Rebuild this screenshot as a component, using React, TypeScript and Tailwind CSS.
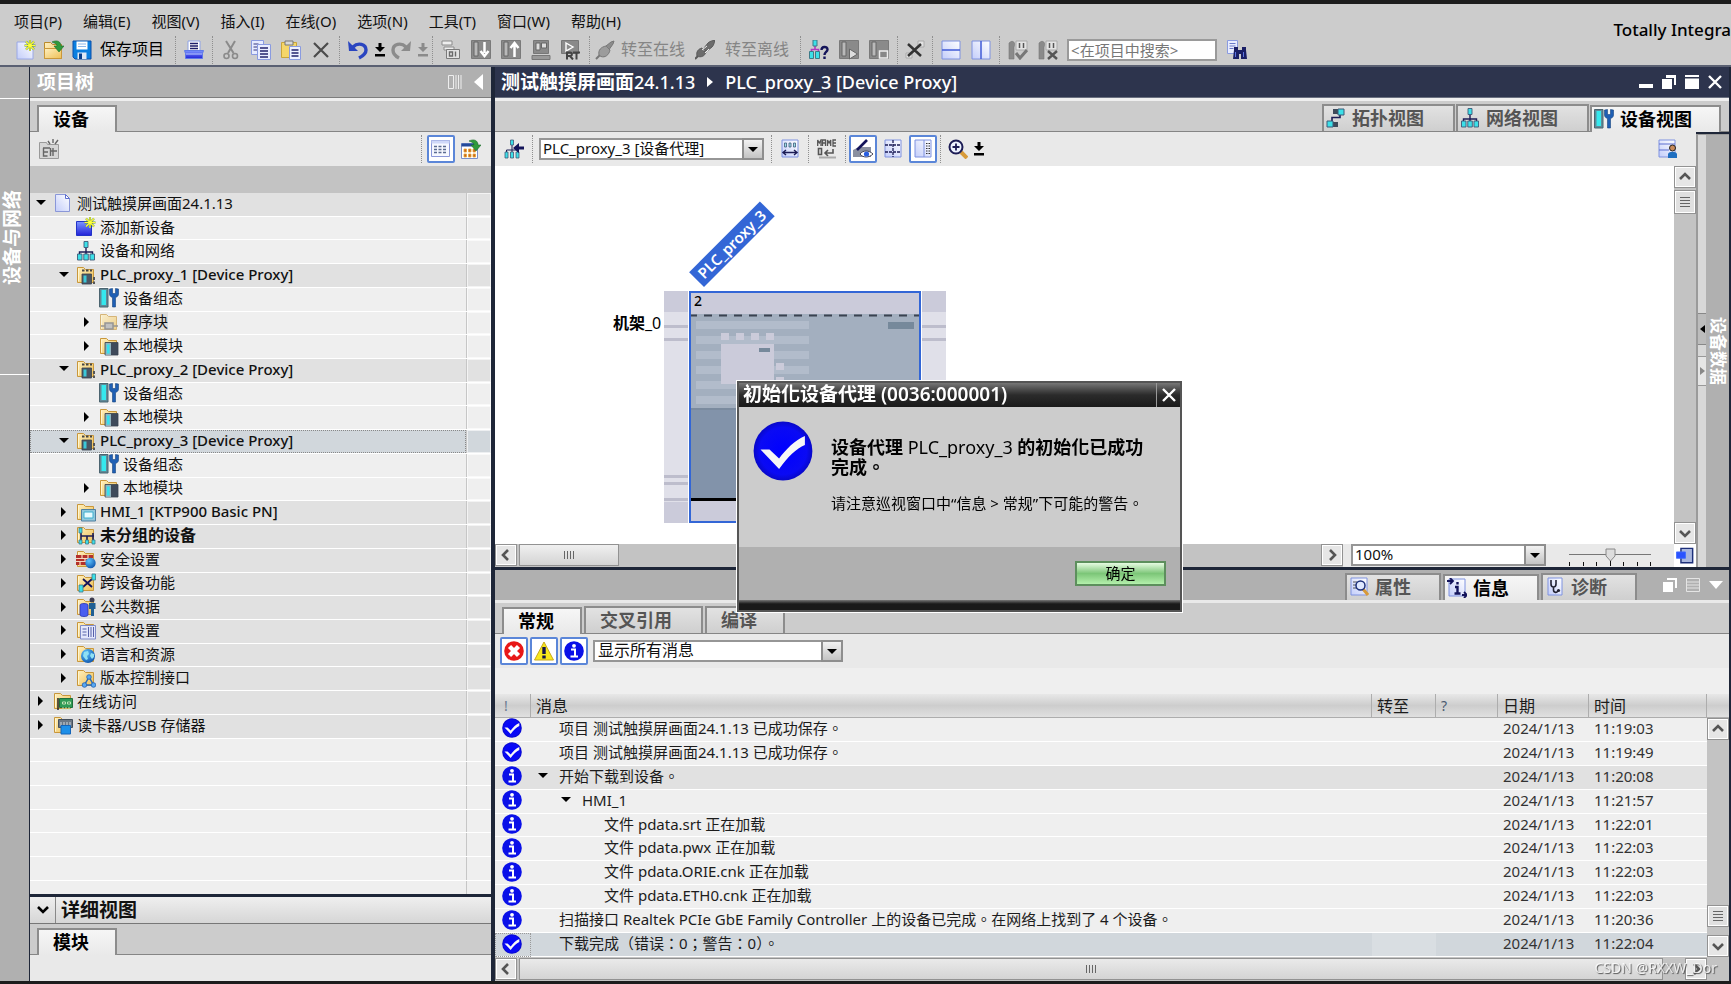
import React, { useState } from "react";
import clsx from "clsx";

/* ---------- icons, all drawn on a 20 x 20 grid ---------- */

const folder = (
  <>
    <path d="M1.5 17.5v-15h6l2 2h8v13z" fill="url(#folder)" stroke="#c9973a" />
    <path d="M2.5 16.5v-13" stroke="#fff6d0" />
  </>
);
const page = (
  <path d="M2 1h16v17H2z" fill="url(#page)" stroke="#7f92e0" />
);
const star = (
  <>
    <path
      d="M14 0v11M8.5 5.500h11M10 1.500l8 8M18 1.500l-8 8"
      stroke="#5d8a4a"
      strokeWidth="2"
    />
    <path
      d="M14 0v11M8.5 5.500h11M10 1.500l8 8M18 1.500l-8 8"
      stroke="#ffff38"
      strokeWidth="1.2"
    />
  </>
);
const greenArrow = (
  <path
    d="M8 2c5-2.500 9-.5 9 4h3l-5 6-5-6h3c0-2-2-3-5-4z"
    fill="#2f9a3c"
    stroke="#1c6b2a"
    strokeWidth=".6"
  />
);
const net = (
  <>
    <path d="M10 6v5M3.500 14v-3h13v3M10 11v3" stroke="#1c1c55" fill="none" strokeWidth="1.4" />
    <g fill="#3ce0e8" stroke="#3d5a78" strokeWidth=".9">
      <path d="M8 .5h4v6H8zM1.500 13h4.500v6h-4.500zM7.800 13h4.500v6h-4.500zM14 13h4.500v6H14z" />
    </g>
  </>
);
const plug = (
  <g fill="#8c8c8c" stroke="#777">
    <path d="M1 19l4-4" strokeWidth="2" />
    <path d="M4 15c-1-5 2-8 7-9l4 4c-1 5-5 8-9 6.500z" fill="#9c9c9c" />
    <path d="M11 6l5-4 3-1-1 3-3.500 5" />
  </g>
);
const greyBox = <path d="M.5.5h19v18H.5z" fill="#8a8a8a" stroke="#7a7a7a" />;

const icons: Record<string, React.ReactNode> = {
  new: (
    <>
      <path d="M1 2h13l3 3v14H1z" fill="url(#page)" stroke="#9aa8e6" />
      {star}
    </>
  ),
  open: (
    <>
      <path d="M.5 18.500v-16h6l2 2h9v14z" fill="url(#folder)" stroke="#b98a2c" />
      <path d="M.5 18.500v-10h17v10z" fill="url(#folder)" stroke="#c9973a" />
      {greenArrow}
    </>
  ),
  save: (
    <>
      <path d="M1 1h18v18H3l-2-2z" fill="#0a7fe0" stroke="#0b4fa8" />
      <path d="M4.500 1.500h11v8h-11z" fill="#fff" />
      <path d="M6 4h8M6 6.500h8" stroke="#8db7ea" />
      <path d="M5.500 12.500h9V19h-9z" fill="#dfe9f5" />
      <path d="M7 13.500h3V19H7z" fill="#0b3f8a" />
    </>
  ),
  print: (
    <>
      <path d="M4 1h12v10H4z" fill="#fff" stroke="#8ea2e6" />
      <path d="M6 3.500h8M6 6h8M6 8.500h8" stroke="#1c1c6a" strokeWidth="1.3" />
      <path d="M.5 10.500h19l-1 3v5h-17v-5z" fill="url(#blue)" stroke="#5f7ae8" />
      <path d="M2 14h16" stroke="#b8c8ff" />
    </>
  ),
  cut: (
    <g stroke="#8b8b8b" fill="none" strokeWidth="2">
      <path d="M5 1l7.500 12M14 1L7 13" />
      <circle cx="5.500" cy="16" r="2.500" strokeWidth="1.600" />
      <circle cx="14" cy="16" r="2.500" strokeWidth="1.600" />
    </g>
  ),
  copy: (
    <>
      <path d="M.5.5h12v14H.5z" fill="#e6ebff" stroke="#8a9be0" />
      <path d="M2.500 4h5M2.500 7h5M2.500 10h5" stroke="#34347a" />
      <path d="M6.500 4.500h13v15h-13z" fill="#e9edff" stroke="#8a9be0" />
      <path d="M9 8h8M9 11h8M9 14h8M9 17h8" stroke="#23236e" strokeWidth="1.500" />
    </>
  ),
  paste: (
    <>
      <path d="M.5 2.500h15v15H.5z" fill="#f5d66a" stroke="#c9a53a" />
      <path d="M4 1h8v4H4z" fill="#d8d8d8" stroke="#777" />
      <path d="M8.500 6.500h11v13h-11z" fill="#eef1ff" stroke="#8a9be0" />
      <path d="M10.500 10h7M10.500 13h7M10.500 16h7" stroke="#23236e" strokeWidth="1.300" />
    </>
  ),
  del: <path d="M3 3l14 14M17 3L3 17" stroke="#4c4c4c" strokeWidth="2.200" />,
  undo: (
    <>
      <path d="M0 1l1 10h9z" fill="#2a45c0" />
      <path d="M5 7c5-5 13-3 13 3 0 4-3 6-7 8" stroke="#2a45c0" strokeWidth="3.400" fill="none" />
    </>
  ),
  redo: (
    <>
      <path d="M20 1l-1 10h-9z" fill="#8b8b8b" />
      <path d="M15 7C10 2 2 4 2 10c0 4 2 6 6 8" stroke="#8b8b8b" strokeWidth="3.400" fill="none" />
    </>
  ),
  compile: (
    <>
      <path d="M1 1h10v4H1zM3 7h10v3H3z" fill="#eee" stroke="#8b8b8b" />
      <path d="M5.500 9.500h13v9h-13z" fill="#e2e2e2" stroke="#7a7a7a" />
      <path d="M8.500 12h3v4h-3zM14.500 11.500v5" stroke="#6a6a6a" strokeWidth="1.400" fill="none" />
    </>
  ),
  download: (
    <>
      {greyBox}
      <path d="M3 2h4v14H3z" fill="#b9b9b9" stroke="#666" />
      <path d="M13.500 2v11M9.500 11l4 5 4-5" stroke="#fff" strokeWidth="2.500" fill="none" />
    </>
  ),
  upload: (
    <>
      {greyBox}
      <path d="M3 2h4v14H3z" fill="#b9b9b9" stroke="#666" />
      <path d="M13.500 17V5M9.500 8l4-5 4 5" stroke="#fff" strokeWidth="2.500" fill="none" />
    </>
  ),
  sim: (
    <>
      <path d="M2.500 .5h15v13h-15z" fill="#8a8a8a" stroke="#777" />
      <path d="M5 3h4v7H5zM10.500 3h5v5h-5z" fill="#ddd" stroke="#666" />
      <path d="M1 15.500h18v4H1z" fill="#999" stroke="#777" />
    </>
  ),
  runtime: (
    <>
      <path d="M.5.500h17v13H.5z" fill="#8a8a8a" stroke="#777" />
      <path d="M5 3l7 4-7 4z" fill="none" stroke="#fff" strokeWidth="1.400" />
      <path
        d="M6 19.500v-7h3c2.500 0 2.500 3.500 0 3.500H6M9 16l3 3.500M12 12.500h7M15.500 12.500v7"
        stroke="#444"
        strokeWidth="2"
        fill="none"
      />
    </>
  ),
  plug,
  unplug: (
    <g fill="#6c6c6c" stroke="#5a5a5a">
      <path d="M0 19l3-3" strokeWidth="2" />
      <path d="M2 16c-1-4 1-7 5-8l1 3 3 1c-1 4-5 6-9 4z" />
      <path d="M9 8l4-5c2-2 4-2 7-3-1 3-1 5-3 7l-5 4-3-1z" />
      <path d="M7 10l5-4M10 13l4-4" stroke="#eee" />
    </g>
  ),
  nethelp: (
    <>
      <path d="M6 5v4M2.500 12V9.500h7V12" stroke="#b03ac0" strokeWidth="1.600" fill="none" />
      <path d="M4 0h4v6H4zM.5 11.500h4v7h-4zM6.500 11.500h4v7h-4z" fill="#3ce0e8" stroke="#3d7a88" />
      <path
        d="M12.500 10c0-4 6-4 6-.5 0 2.500-3 2.500-3 5.500M15.500 16.500V19"
        stroke="#14145a"
        strokeWidth="2.400"
        fill="none"
      />
    </>
  ),
  start: (
    <>
      {greyBox}
      <path d="M3 2h4v14H3z" fill="#b9b9b9" stroke="#666" />
      <path d="M10.500 9l8 5-8 5z" fill="#ddd" stroke="#666" />
    </>
  ),
  stop: (
    <>
      {greyBox}
      <path d="M3 2h4v14H3z" fill="#b9b9b9" stroke="#666" />
      <path d="M10.500 11h8v7h-8z" fill="#888" stroke="#eee" strokeWidth="1.500" />
    </>
  ),
  xref: (
    <>
      <path d="M13 1h6v6h-6zM1 13h6v5H1z" fill="#e2e2e2" stroke="#aaa" />
      <path d="M3 4l13 12M16 4L3 16" stroke="#333" strokeWidth="2.500" />
    </>
  ),
  splith: (
    <>
      <path d="M1 1h18v18H1z" fill="url(#page)" stroke="#7f92e0" />
      <path d="M1 10h18" stroke="#4a63d8" strokeWidth="1.600" />
    </>
  ),
  splitv: (
    <>
      <path d="M1 1h18v18H1z" fill="url(#page)" stroke="#7f92e0" />
      <path d="M10 1v18" stroke="#4a63d8" strokeWidth="1.600" />
    </>
  ),
  check1: (
    <>
      <path d="M1 3c4-4 7 0 5 4v12H1V8z" fill="#8a8a8a" stroke="#777" strokeWidth=".6" />
      <path d="M8 1h11v9H8z" fill="#e4e4e4" stroke="#aaa" />
      <path d="M11.500 3v5M15.500 3v5" stroke="#555" strokeWidth="1.500" />
      <path d="M8 13l4 5 7-8" stroke="#777" strokeWidth="3" fill="none" />
    </>
  ),
  check2: (
    <>
      <path d="M1 3c4-4 7 0 5 4v12H1V8z" fill="#8a8a8a" stroke="#777" strokeWidth=".6" />
      <path d="M8 1h11v9H8z" fill="#e4e4e4" stroke="#aaa" />
      <path d="M11.500 3v5M15.500 3v5" stroke="#555" strokeWidth="1.500" />
      <path d="M10 11l9 8M19 11l-9 8" stroke="#555" strokeWidth="2.400" />
    </>
  ),
  find: (
    <>
      <path d="M.5.500h10v13H.5z" fill="#e9edff" stroke="#8a9be0" />
      <path d="M2.500 3.500h6M2.500 6h6M2.500 8.500h4" stroke="#6a7ac8" />
      <path d="M7 7h4v3h4V7h4v3l1 9h-6v-5h-2v5H6l1-9z" fill="#1a1f66" />
      <path d="M8.500 12v5M16.500 12v5" stroke="#5d74e0" />
    </>
  ),
  greyfolder: (
    <>
      <path d="M.5 3.500h7l1 2h11v14H.5z" fill="#d6d6d6" stroke="#9a9a9a" />
      <path d="M4 9h7M4.500 9v8h4M4 13h5M11.500 9v8M14 9v8M12 12h6M9 2l2 3M14 0v4M19 1l-3 4" stroke="#666" strokeWidth="1.400" fill="none" />
    </>
  ),
  list: (
    <>
      <path d="M.5 1.500h18v16H.5z" fill="#f6f8ff" stroke="#8a97d8" />
      <path d="M.5 1.500h18v3H.5z" fill="#cfd8f8" />
      <path d="M3 7.500h13M3 10.500h13M3 13.500h13" stroke="#5a6a90" strokeWidth="1.400" strokeDasharray="3 1.500" />
    </>
  ),
  tableout: (
    <>
      <path d="M.5 4.500h16v15H.5z" fill="#fff" stroke="#7a8fc8" />
      <path d="M.5 4.500h16v3H.5z" fill="#234a9a" />
      <path
        d="M3 10h2.500v3H3zM7.500 10H10v3H7.500zM12 10h2.500v3H12zM3 15h2.500v3H3zM7.500 15H10v3H7.500zM12 15h2.500v3H12z"
        fill="#c8641a"
        stroke="#e8a83a"
        strokeWidth=".8"
      />
      {greenArrow}
    </>
  ),
  doc: (
    <>
      <path d="M2.500 1.500h10l4 4v13h-14z" fill="url(#page)" stroke="#8a97d8" />
      <path d="M12.500 1.500l4 4h-4z" fill="#fff" stroke="#5d6fd0" />
    </>
  ),
  adddev: (
    <>
      <path d="M.5 4.500h15v14H.5z" fill="url(#blue)" stroke="#2233c8" />
      {star}
    </>
  ),
  net,
  plc: (
    <>
      {folder}
      <path d="M6 5.500h2.500M10 5.500h2.500M14 5.500h2" stroke="#444" strokeWidth="2" />
      <path d="M6 9h9.500v10H6z" fill="#4b5563" stroke="#39424f" strokeWidth=".8" />
      <path d="M7.500 10.500h3v7h-3z" fill="#3cc8d8" />
      <path d="M18 12v3M18 16.500v2.500" stroke="#555" strokeWidth="2" />
    </>
  ),
  config: (
    <>
      <path d="M.5.500h8.500v18.500H.5z" fill="#5f8a98" stroke="#4b6470" />
      <path d="M2.500 2h4.500v15H2.500z" fill="#35e8ee" />
      <path d="M10.500 1v5c0 2 1.500 3 3 3.500V19h3V9.500c1.500-.5 3-1.500 3-3.500V1l-3-.5v5h-3v-5z" fill="#1f5fb4" stroke="#16457f" strokeWidth=".6" />
    </>
  ),
  block: (
    <g opacity=".65">
      {folder}
      <path d="M6 11h8v6H6zM2 14h4M14 14h5" fill="#aaa" stroke="#666" strokeWidth="1.500" />
    </g>
  ),
  module: (
    <>
      {folder}
      <path d="M6 6.500h13v12.500H6z" fill="#3f4a5a" stroke="#39424f" strokeWidth=".8" />
      <path d="M6.500 7h5.500v12H6.500z" fill="#8fb4c0" />
      <path d="M7.800 8.500h2.800v9H7.800z" fill="#35e0ee" />
    </>
  ),
  hmi: (
    <>
      {folder}
      <path d="M5.500 7.500h14v11.500h-14z" fill="#8fc8dc" stroke="#4f7fa0" />
      <path d="M8 10h9v6H8z" fill="#e6fbff" stroke="#3fb0d0" />
    </>
  ),
  ungrouped: (
    <>
      {folder}
      <path d="M5 11h13M5 6v9M11 11v5M17 8v8" stroke="#1c1c55" strokeWidth="1.600" />
      <path d="M3 3h3v5H3zM3 15h3v4H3zM9.500 15h3v4h-3zM16 15h3v4h-3z" fill="#3ce0e8" stroke="#3d7a88" strokeWidth=".8" />
    </>
  ),
  security: (
    <>
      {folder}
      <path d="M0 6h17v10H0z" fill="#b4302a" />
      <path d="M0 9.500h17M0 12.500h17M6 6v3.500M12 6v3.500M9 9.500v3M4 12.500V16M11 12.500V16" stroke="#f4d9c0" strokeWidth="1.200" />
      <circle cx="14.500" cy="14" r="5.200" fill="url(#globe)" />
    </>
  ),
  cross: (
    <>
      {folder}
      <path d="M7 6l9 8M16 6l-9 8" stroke="#14145a" strokeWidth="1.800" />
      <path d="M16 1h3.500v6H16zM3 12h4v7H3z" fill="#3ce0e8" stroke="#3d7a88" strokeWidth=".8" />
    </>
  ),
  common: (
    <>
      {folder}
      <path d="M4 8c0-2 8-2 8 0v10c0 2-8 2-8 0z" fill="#4a5ef0" stroke="#2a35b0" strokeWidth=".8" />
      <circle cx="16" cy="3" r="2.500" fill="#3c3c50" />
      <path d="M13 6h6.500v6H18v7h-3v-7h-2z" fill="#1f5f94" />
    </>
  ),
  docset: (
    <>
      {folder}
      <path d="M4.500 5.500h15v13.500h-15z" fill="#e3e7fb" stroke="#7f8bc8" />
      <path d="M6.500 9h4M6.500 12h4M6.500 15h4M12.500 7v10M15 7v10M17.500 7v10" stroke="#5560a8" />
    </>
  ),
  lang: (
    <>
      {folder}
      <circle cx="12" cy="12" r="7" fill="url(#globe)" />
      <path d="M8 8l4-1 1 3-2 2 1 3-2 1-3-4zM15 9l3 1v3l-2 2-2-3z" fill="#8fe0f4" />
    </>
  ),
  version: (
    <>
      {folder}
      <path d="M13 9l-4.500 8h9z" fill="none" stroke="#2a6ab8" strokeWidth="1.500" />
      <g fill="#58a8f0" stroke="#1f5fb4" strokeWidth=".8">
        <circle cx="13" cy="9" r="2.300" />
        <circle cx="8.500" cy="17" r="2.300" />
        <circle cx="17.500" cy="17" r="2.300" />
      </g>
    </>
  ),
  online: (
    <>
      {folder}
      <path d="M5 7v12" stroke="#222" strokeWidth="1.500" />
      <path d="M6.500 7.500h13v9h-13z" fill="#2f9a55" stroke="#1f6f3a" />
      <path d="M9.500 11h3v2h-3zM14.500 11h3v2h-3zM10 16v3M13 16v3M16 16v3" stroke="#bfe8b8" fill="#1f6f3a" />
    </>
  ),
  card: (
    <>
      {folder}
      <path d="M5.500 4.500h14v8h-14z" fill="#6b7684" stroke="#444f5c" />
      <path d="M8 7v4M11 7v4M14 7v4M17 7v4" stroke="#d0d8e0" />
      <path d="M8 10.500h9.500v8.500H8z" fill="#1e8fe8" stroke="#1565b8" />
    </>
  ),
  netback: (
    <>
      <path d="M8 6v5M2.500 13v-2h11v2M8 11v2" stroke="#1c1c55" fill="none" />
      <path d="M6.500 1h3v5h-3zM1 13h3v6H1zM6.500 13h3v6h-3zM12 13h3v6h-3z" fill="#3ce0e8" stroke="#3d5a78" strokeWidth=".8" />
      <path d="M9 9l6-5v3.500h5v3h-5V14z" fill="#14145a" />
    </>
  ),
  addr: (
    <>
      {page}
      <path d="M4.500 4h2v4h-2zM9 4h2v4H9zM13.500 4h2v4h-2z" fill="#9fe0e8" stroke="#3d5a78" strokeWidth=".8" />
      <path d="M4 13.500h12M6 11l-3 2.500L6 16M14 11l3 2.500-3 2.500" stroke="#1c1c55" strokeWidth="1.400" fill="none" />
    </>
  ),
  rename: (
    <g stroke="#555" fill="none" strokeWidth="1.300">
      <path d="M.7 7V1l1.600 3L4 1v6M5.500 7V1h3v6M5.500 4h3M10.500 7V1l1.600 3 1.600-3v6M19 1h-3v6h3M16 4h3" />
      <path d="M1.500 9.500h3v6h-3zM16 10v4H9M11 11l-3 3 3 3" strokeWidth="1.600" />
      <path d="M2 18.500h17" stroke="#aaa" strokeWidth="2" />
    </g>
  ),
  pen: (
    <>
      <path d="M0 11l6-3h12v10H0z" fill="#8a90a0" />
      <path d="M4 11L14 1" stroke="#14145a" strokeWidth="2.600" />
      <path d="M7 15c3-4 9-4 13 0-4 4-10 4-13 0z" fill="#fff" stroke="#445" />
      <circle cx="13.500" cy="15" r="2.600" fill="#2a5fe0" />
    </>
  ),
  grid: (
    <>
      {page}
      <path d="M10 1v17M2 6h16M2 13h16" stroke="#1c1c55" strokeWidth="1.300" strokeDasharray="3 1" />
    </>
  ),
  side: (
    <>
      {page}
      <path d="M11 1v17" stroke="#7f92e0" />
      <path d="M13 4.500h4M13 7h4M13 9.500h4M13 12h4M13 14.500h4" stroke="#333" strokeWidth="1.200" strokeDasharray="1.500 1" />
    </>
  ),
  zoom: (
    <>
      <path d="M13 13l6 6" stroke="#d79a3a" strokeWidth="4" />
      <circle cx="8" cy="8" r="6.500" fill="#eef3ff" stroke="#1c1c55" strokeWidth="2" />
      <path d="M8 4.500v7M4.500 8h7" stroke="#1c1c55" strokeWidth="1.800" />
    </>
  ),
  userlayout: (
    <>
      {page}
      <path d="M2 5h16M2 11h10" stroke="#5d6fd0" />
      <circle cx="15.500" cy="9" r="3" fill="#c98a5a" stroke="#222" />
      <path d="M11 19v-4c1-3 8-3 9 0v4z" fill="#1f6fc0" />
    </>
  ),
  topology: (
    <>
      <path d="M6 13V9.500h8V7" stroke="#1c1c55" strokeWidth="1.600" fill="none" />
      <path d="M7 1h5v5H7zM7 14h5v5H7z" fill="#3f4a5a" />
      <path d="M12 1h6v6h-6zM1 13h6v6H1z" fill="#3ce0e8" stroke="#3d5a78" />
    </>
  ),
  props: (
    <>
      {page}
      <path d="M4 5h4M4 8h3M4 11h4" stroke="#555" />
      <path d="M14 12l5 6" stroke="#d79a3a" strokeWidth="3" />
      <circle cx="11.500" cy="8.500" r="4.500" fill="#dfe8ff" stroke="#1c2f7a" strokeWidth="1.500" />
    </>
  ),
  infotab: (
    <>
      {page}
      <path d="M0 3h5M3 0l3 3-3 3M15 17h5M17 14l3 3-3 3" stroke="#14145a" strokeWidth="1.800" fill="none" />
      <path d="M10.500 4v2.500M8 9h2.500v6M7.500 15.500h6" stroke="#14145a" strokeWidth="2.400" fill="none" />
    </>
  ),
  diag: (
    <>
      <path d="M3 1h14v17H3z" fill="url(#page)" stroke="#7f92e0" />
      <path d="M6 3v4c0 4 5 4 5 0V3M8.500 10v3c0 3 4 3 4 1" stroke="#223" strokeWidth="1.600" fill="none" />
      <circle cx="13.500" cy="13.500" r="1.600" fill="#223" />
    </>
  ),
  error: (
    <>
      <circle cx="10" cy="10" r="9.800" fill="#e81818" />
      <path d="M5.500 5.500l9 9M14.500 5.500l-9 9" stroke="#fff" strokeWidth="4.400" />
    </>
  ),
  warn: (
    <>
      <path d="M10 1l9.500 18H.5z" fill="#f8e81c" stroke="#c8a81c" />
      <path d="M10 6v7M10 14.500v3" stroke="#14144a" strokeWidth="3.400" />
    </>
  ),
  info: (
    <>
      <circle cx="10" cy="10" r="9.800" fill="#0a10e8" />
      <path d="M7 8.500h4V15M6.500 15.500h7.500" stroke="#fff" strokeWidth="2" fill="none" />
      <circle cx="10" cy="4.800" r="1.900" fill="#fff" />
    </>
  ),
  ok: (
    <>
      <circle cx="10" cy="10" r="9.800" fill="url(#okblue)" />
      <path d="M2.500 9.500h3L8.700 12.500C11 9.500 14 6.300 17.300 5v3C14.500 9.200 11.500 12 8.700 16z" fill="#f6f6f6" />
    </>
  ),
  overview: (
    <>
      <path d="M5.500 1.500h13v16h-13z" fill="#a9b6dd" stroke="#1c2f7a" strokeWidth="1.600" />
      <path d="M.5 5.500h10v7H.5z" fill="#2a52ff" stroke="#3f6bff" />
    </>
  ),
};

type IconProps = { name: string; className?: string };

const Icon = ({ name, className }: IconProps) => (
  <svg
    viewBox="0 0 20 20"
    className={clsx("shrink-0", className || "size-5")}
    fill="none"
    aria-hidden="true"
  >
    {icons[name]}
  </svg>
);

const Gradients = () => (
  <svg className="absolute size-0" aria-hidden="true">
    <defs>
      <linearGradient id="folder" x1="0" y1="0" x2="1" y2="1">
        <stop offset="0" stopColor="#fff0bf" />
        <stop offset="1" stopColor="#eebf56" />
      </linearGradient>
      <linearGradient id="page" x1="1" y1="0" x2="0" y2="1">
        <stop offset="0" stopColor="#ffffff" />
        <stop offset="1" stopColor="#c3cdfa" />
      </linearGradient>
      <linearGradient id="blue" x1="0" y1="0" x2="0" y2="1">
        <stop offset="0" stopColor="#7d96ff" />
        <stop offset="1" stopColor="#2222d8" />
      </linearGradient>
      <radialGradient id="globe" cx=".35" cy=".3" r=".8">
        <stop offset="0" stopColor="#5ec4ff" />
        <stop offset="1" stopColor="#0a4fa8" />
      </radialGradient>
      <radialGradient id="okblue">
        <stop offset="0" stopColor="#0000ff" />
        <stop offset=".8" stopColor="#0a0af4" />
        <stop offset="1" stopColor="#0808c8" />
      </radialGradient>
    </defs>
  </svg>
);

/* ---------- small shared parts ---------- */

const Sep = () => (
  <span className="mx-[3px] h-7 w-px shrink-0 border-l border-dotted border-[#8f8f8f]" />
);

type ToolProps = { icon: string; label: string; className?: string; on?: boolean };

const Tool = ({ icon, label, className, on }: ToolProps) => (
  <button
    aria-label={label}
    className={clsx(
      "flex h-7 shrink-0 items-center justify-center",
      on && "rounded-xs border-2 border-[#5b86d8] bg-white",
      className || "w-[30px]"
    )}
  >
    <Icon name={icon} />
  </button>
);

const DropMark = ({ grey }: { grey?: boolean }) => (
  <button aria-label="更多" className="flex w-[13px] shrink-0 justify-center">
    <svg viewBox="0 0 10 14" className={clsx("h-3.5 w-2.5", grey ? "fill-[#8b8b8b]" : "fill-black")}>
      <path d="M3.500 0h3v4H10L5 9 0 4h3.500zM0 11h10v2.500H0z" />
    </svg>
  </button>
);

const chevrons = {
  up: "M2 9l5-5 5 5",
  down: "M2 5l5 5 5-5",
  left: "M9 2L4 7l5 5",
  right: "M5 2l5 5-5 5",
};

const ScrollButton = ({ dir, className }: { dir: keyof typeof chevrons; className?: string }) => (
  <button
    aria-label={dir}
    className={clsx(
      "flex size-[22px] shrink-0 items-center justify-center border border-[#929292] bg-[#e6e6e6] ring-1 ring-white ring-inset",
      className
    )}
  >
    <svg viewBox="0 0 14 14" className="size-3.5" fill="none">
      <path d={chevrons[dir]} stroke="#555" strokeWidth="2.600" />
    </svg>
  </button>
);

type ComboProps = { id: string; label: string; value: string; className?: string; text?: string };

const Combo = ({ id, label, value, className, text }: ComboProps) => (
  <div className={clsx("relative h-[22px] shrink-0 border-2 border-[#969696] bg-white", className)}>
    <label htmlFor={id} className="sr-only">
      {label}
    </label>
    <select
      id={id}
      className={clsx(
        "-mt-0.5 block h-5 w-full appearance-none bg-transparent pr-6 leading-5 text-[#111]",
        text || "pl-0.5 text-[15px]"
      )}
    >
      <option>{value}</option>
    </select>
    <span className="pointer-events-none absolute -inset-y-0.5 -right-0.5 flex w-[22px] items-center justify-center border-2 border-[#8e8e8e] bg-linear-to-b from-[#f2f2f2] to-[#c4c4c4]">
      <svg viewBox="0 0 10 5" className="h-[5px] w-2.5">
        <path d="M0 0h10L5 5z" />
      </svg>
    </span>
  </div>
);

type TabProps = { label: string; icon?: string; active?: boolean; className?: string };

const Tab = ({ label, icon, active, className }: TabProps) => (
  <button
    role="tab"
    aria-selected={!!active}
    className={clsx(
      "flex h-[27px] shrink-0 items-center border-2 border-b-0 border-[#8c8c8c] pb-0.5 text-lg leading-none font-bold",
      active
        ? "-mb-px bg-linear-to-b from-[#f6f6f6] to-[#e9e9e9] text-black"
        : "bg-linear-to-b from-[#e2e2e2] to-[#cfcfcf] text-[#555]",
      className
    )}
  >
    {icon && <Icon name={icon} className="mx-0.5 size-5" />}
    {label}
  </button>
);

/* ---------- menu and main toolbar ---------- */

const menus = [
  "项目(P)",
  "编辑(E)",
  "视图(V)",
  "插入(I)",
  "在线(O)",
  "选项(N)",
  "工具(T)",
  "窗口(W)",
  "帮助(H)",
];

const Header = () => (
  <header className="flex h-[63px] shrink-0 justify-between overflow-hidden border-b-2 border-[#5a6072] bg-[#ccc]">
    <div className="flex shrink-0 flex-col">
      <nav className="flex h-[31px] items-center gap-[21px] pt-[3px] pl-3.5 text-[15px] leading-none text-[#111]">
        {menus.map((m) => (
          <button key={m}>{m}</button>
        ))}
      </nav>
      <div className="flex h-[29px] items-center pl-3 text-base leading-none">
        <Tool icon="new" label="新建项目" className="w-7" />
        <Tool icon="open" label="打开项目" className="w-7" />
        <Tool icon="save" label="保存" className="w-7" />
        <button className="mr-2 ml-1 pb-0.5 whitespace-nowrap">保存项目</button>
        <Sep />
        <Tool icon="print" label="打印" />
        <Sep />
        <Tool icon="cut" label="剪切" />
        <Tool icon="copy" label="复制" />
        <Tool icon="paste" label="粘贴" />
        <Tool icon="del" label="删除" />
        <Sep />
        <Tool icon="undo" label="撤消" />
        <DropMark />
        <Tool icon="redo" label="恢复" />
        <DropMark grey />
        <Sep />
        <Tool icon="compile" label="编译" />
        <Tool icon="download" label="下载到设备" />
        <Tool icon="upload" label="从设备上传" />
        <Tool icon="sim" label="启动仿真" />
        <Tool icon="runtime" label="启动运行系统" />
        <Sep />
        <Tool icon="plug" label="在线" className="w-6" />
        <button className="ml-1 pb-0.5 whitespace-nowrap text-[#858585]">转至在线</button>
        <Tool icon="unplug" label="离线" className="mx-1 w-8" />
        <button className="mr-2 pb-0.5 whitespace-nowrap text-[#858585]">转至离线</button>
        <Sep />
        <Tool icon="nethelp" label="可访问的设备" />
        <Tool icon="start" label="启动 CPU" />
        <Tool icon="stop" label="停止 CPU" />
        <Sep />
        <Tool icon="xref" label="交叉引用" className="w-7" />
        <Sep />
        <Tool icon="splith" label="水平拆分" />
        <Tool icon="splitv" label="垂直拆分" />
        <Sep />
        <Tool icon="check1" label="检查" />
        <Tool icon="check2" label="取消检查" />
        <input
          type="text"
          aria-label="在项目中搜索"
          placeholder="<在项目中搜索>"
          className="ml-1 h-[22px] w-[150px] border-2 border-[#9a9a9a] bg-white px-0.5 text-[15px] leading-none placeholder:text-[#777]"
        />
        <Tool icon="find" label="搜索" className="ml-1 w-8" />
      </div>
    </div>
    <span className="shrink-0 pt-4 text-[17px] leading-5 font-medium whitespace-nowrap text-black">
      Totally Integra
    </span>
  </header>
);

/* ---------- project tree ---------- */

type TreeRow = {
  level: 0 | 1 | 2;
  icon: string;
  text: string;
  arrow?: "open" | "closed";
  tone?: "grey" | "selected";
  weight?: "medium" | "bold";
  marked?: boolean;
};

const tree: TreeRow[] = [
  { level: 0, icon: "doc", text: "测试触摸屏画面24.1.13", arrow: "open", tone: "grey" },
  { level: 1, icon: "adddev", text: "添加新设备" },
  { level: 1, icon: "net", text: "设备和网络" },
  { level: 1, icon: "plc", text: "PLC_proxy_1 [Device Proxy]", arrow: "open", tone: "grey", weight: "medium" },
  { level: 2, icon: "config", text: "设备组态" },
  { level: 2, icon: "block", text: "程序块", arrow: "closed", marked: true },
  { level: 2, icon: "module", text: "本地模块", arrow: "closed" },
  { level: 1, icon: "plc", text: "PLC_proxy_2 [Device Proxy]", arrow: "open", tone: "grey", weight: "medium" },
  { level: 2, icon: "config", text: "设备组态" },
  { level: 2, icon: "module", text: "本地模块", arrow: "closed" },
  { level: 1, icon: "plc", text: "PLC_proxy_3 [Device Proxy]", arrow: "open", tone: "selected", weight: "medium" },
  { level: 2, icon: "config", text: "设备组态" },
  { level: 2, icon: "module", text: "本地模块", arrow: "closed" },
  { level: 1, icon: "hmi", text: "HMI_1 [KTP900 Basic PN]", arrow: "closed", tone: "grey", weight: "medium" },
  { level: 1, icon: "ungrouped", text: "未分组的设备", arrow: "closed", tone: "grey", weight: "bold" },
  { level: 1, icon: "security", text: "安全设置", arrow: "closed", tone: "grey" },
  { level: 1, icon: "cross", text: "跨设备功能", arrow: "closed", tone: "grey" },
  { level: 1, icon: "common", text: "公共数据", arrow: "closed", tone: "grey" },
  { level: 1, icon: "docset", text: "文档设置", arrow: "closed", tone: "grey" },
  { level: 1, icon: "lang", text: "语言和资源", arrow: "closed", tone: "grey" },
  { level: 1, icon: "version", text: "版本控制接口", arrow: "closed", tone: "grey" },
  { level: 0, icon: "online", text: "在线访问", arrow: "closed", tone: "grey" },
  { level: 0, icon: "card", text: "读卡器/USB 存储器", arrow: "closed", tone: "grey" },
];

const blankRows = [0, 1, 2, 3, 4, 5];
const indents = ["pl-1", "pl-[27px]", "pl-[50px]"];

const TreeArrow = ({ state }: { state?: "open" | "closed" }) => (
  <span className="flex w-3.5 shrink-0 justify-center">
    {state && (
      <svg viewBox="0 0 10 10" className="size-2.5">
        <path d={state === "open" ? "M0 2h10L5 7z" : "M2 0l5 5-5 5z"} />
      </svg>
    )}
  </span>
);

const rowTone = (tone?: string) =>
  tone === "selected" ? "bg-[#d1d7dc]" : tone === "grey" ? "bg-[#e1e1e1]" : "bg-[#efefef]";

const ProjectTree = () => (
  <aside className="flex w-[461px] shrink-0 flex-col">
    <div className="flex h-[31px] shrink-0 items-center border-b border-[#7d7d7d] bg-[#b0b0b0] pr-2 pl-[7px]">
      <h2 className="flex-1 text-[19px] leading-none font-bold text-white">项目树</h2>
      <button aria-label="列" className="mr-3">
        <svg viewBox="0 0 14 14" className="size-3.5" fill="none" stroke="#eee">
          <path d="M.5.500h5v13h-5zM8 0v14M10.500 0v14M13 0v14" />
        </svg>
      </button>
      <button aria-label="折叠">
        <svg viewBox="0 0 9 16" className="h-4 w-[9px]" fill="#fff">
          <path d="M9 0v16L0 8z" />
        </svg>
      </button>
    </div>
    <div className="flex h-[34px] shrink-0 items-end border-t-[3px] border-b border-t-[#efefef] border-b-[#858585] bg-[#ccc] pl-[7px]">
      <Tab label="设备" active className="w-20 pl-3.5" />
    </div>
    <div className="flex h-[34px] shrink-0 items-center bg-[#e9e9e9] pr-1.5 pl-1">
      <Tool icon="greyfolder" label="新建组" />
      <span className="flex-1" />
      <Sep />
      <Tool icon="list" label="列表" on className="ml-0.5 w-7" />
      <Tool icon="tableout" label="导出" className="ml-0.5 w-7" />
    </div>
    <div className="h-[27px] shrink-0 bg-[#c3c3c3]" />
    <ul className="flex min-h-0 flex-1 flex-col overflow-hidden text-[15px] leading-none text-[#111]">
      {tree.map((row, i) => (
        <li key={i} className={clsx("flex min-h-0 flex-1 border-b border-white", rowTone(row.tone))}>
          <div
            className={clsx(
              "flex flex-1 items-center pb-0.5",
              indents[row.level],
              row.tone === "selected" && "outline outline-dotted outline-[#888] -outline-offset-1"
            )}
          >
            <TreeArrow state={row.arrow} />
            <Icon name={row.icon} className="mr-1 ml-[5px] size-5" />
            <span
              className={clsx(
                row.weight === "medium" && "font-medium",
                row.weight === "bold" && "text-base leading-none font-bold",
                row.marked && "bg-[#dcdcdc] py-0.5"
              )}
            >
              {row.text}
            </span>
          </div>
          <span className="w-[25px] shrink-0 border-l border-[#c6c6c6] ring-1 ring-white/60 ring-inset" />
        </li>
      ))}
      {blankRows.map((n) => (
        <li key={n} className="flex min-h-0 flex-1 justify-end border-b border-white bg-[#efefef]">
          <span className="w-[25px] border-l border-[#c6c6c6]" />
        </li>
      ))}
      <li className="flex h-[13px] shrink-0 justify-end bg-[#efefef]">
        <span className="w-[25px] border-l border-[#c6c6c6]" />
      </li>
    </ul>
    <div className="flex h-[30px] shrink-0 border-t-[3px] border-b border-t-[#1e2638] border-b-[#777] bg-linear-to-b from-[#efefef] to-[#d6d6d6]">
      <button aria-label="展开" className="flex w-[26px] items-center justify-center border-r border-[#888]">
        <svg viewBox="0 0 14 10" className="h-2.5 w-3.5" fill="none">
          <path d="M2 2l5 5 5-5" stroke="#000" strokeWidth="2.600" />
        </svg>
      </button>
      <h2 className="self-center pl-[5px] text-[19px] leading-none font-bold text-[#111]">详细视图</h2>
    </div>
    <div className="flex h-[31px] shrink-0 items-end border-b border-[#858585] bg-[#ccc] pl-[7px]">
      <Tab label="模块" active className="w-20 pl-3.5" />
    </div>
    <div className="h-[26px] shrink-0 bg-[#e9e9e9]" />
  </aside>
);

/* ---------- device view ---------- */

const rackLines = [34, 47, 184, 191, 207];

const Rack = () => (
  <svg viewBox="0 0 24 232" className="h-[232px] w-6">
    <path d="M0 0h24v232H0z" fill="#e0e0e9" />
    <path d="M0 0h24v21H0zM0 211h24v21H0z" fill="#cbcbda" />
    {rackLines.map((y) => (
      <path key={y} d={`M0 ${y}h24v3H0z`} fill="#bdbdcc" />
    ))}
  </svg>
);

const slots = [0, 15, 30, 45, 60, 75];

const Canvas = () => (
  <div className="relative min-h-0 flex-1 overflow-hidden bg-white">
    <span className="absolute top-[148px] left-[118px] text-base leading-[18px] font-bold">
      机架<span className="font-normal">_0</span>
    </span>
    <div className="absolute top-[125px] left-[169px] flex gap-px">
      <Rack />
      <div className="relative">
        <svg viewBox="0 0 232 232" className="size-[232px]">
          <path d="M0 0h232v232H0z" fill="#cbcbda" />
          <path d="M1 23h230v97H1z" fill="#a3afbf" />
          <path d="M1 118h230v90H1z" fill="#8293aa" />
          <path d="M1 117h230v2H1z" fill="#7b8b9f" />
          <path d="M1 207h230v3H1z" fill="#000" />
          <path d="M0 24.500h232" stroke="#3a4250" strokeWidth="2" strokeDasharray="8 7" />
          {slots.map((y) => (
            <path key={y} d={`M7 ${y + 30}h113v8H7z`} fill="#b2bccb" />
          ))}
          <path d="M32 42h8v7h-8zM47 42h8v7h-8zM62 42h8v7h-8zM77 42h8v7h-8z" fill="#cbcbda" />
          <path d="M32 53h53v40H32zM87 72h8v7h-8zM87 86h8v7h-8z" fill="#cbcbda" />
          <path d="M70 57h11v4H70zM199 31h26v7h-26z" fill="#76899b" />
          <path d="M1 1h230v230H1z" fill="none" stroke="#3366d6" strokeWidth="2" />
        </svg>
        <span className="absolute top-0.5 left-[5px] text-sm leading-4 font-medium">2</span>
        <span className="absolute bottom-[236px] left-[15px] flex h-[21px] w-[100px] origin-bottom-left -rotate-45 items-center justify-center bg-[#3366d6] text-[15px] leading-none font-semibold text-white">
          PLC_proxy_3
        </span>
      </div>
      <Rack />
    </div>
  </div>
);

const ZoomSlider = () => (
  <div className="relative h-[22px] w-[84px] shrink-0">
    <svg viewBox="0 0 84 22" className="h-[22px] w-[84px]" fill="none">
      <path d="M1 10.500h82" stroke="#777" />
      <path d="M1.500 18v4M15.500 18v4M28.500 18v4M42.500 15v7M55.500 18v4M69.500 18v4M82.500 18v4" stroke="#111" />
      <path d="M38 5h9v7l-4.500 5L38 12z" fill="#ddd" stroke="#888" />
    </svg>
    <input type="range" aria-label="缩放" defaultValue={50} className="absolute inset-0 w-full opacity-0" />
  </div>
);

const WindowControls = () => (
  <div className="flex items-center gap-[9px] text-white">
    <button aria-label="最小化">
      <svg viewBox="0 0 14 14" className="size-3.5" fill="#fff">
        <path d="M0 9h14v4H0z" />
      </svg>
    </button>
    <button aria-label="浮动">
      <svg viewBox="0 0 14 14" className="size-3.5" fill="#fff">
        <path d="M4 0h10v10h-2V3H4zM0 4h10v10H0z" />
      </svg>
    </button>
    <button aria-label="最大化">
      <svg viewBox="0 0 14 14" className="size-3.5" fill="#fff">
        <path d="M0 0h14v2H0zM0 3.500h14V14H0z" />
      </svg>
    </button>
    <button aria-label="关闭">
      <svg viewBox="0 0 14 14" className="size-3.5" stroke="#fff" strokeWidth="2.400">
        <path d="M1 1l12 12M13 1L1 13" />
      </svg>
    </button>
  </div>
);

const DeviceEditor = () => (
  <section className="flex min-h-0 flex-1 flex-col">
    <div className="flex h-[31px] shrink-0 items-center justify-between border-b border-[#6a7080] bg-[#2d344d] pr-[7px] pl-1.5">
      <h1 className="flex items-center text-lg leading-none font-medium text-white">
        <span className="text-[19px] leading-none font-bold">测试触摸屏画面</span>
        24.1.13
        <svg viewBox="0 0 6 10" className="mx-3 h-2.5 w-1.5" fill="#fff">
          <path d="M0 0l6 5-6 5z" />
        </svg>
        PLC_proxy_3 [Device Proxy]
      </h1>
      <WindowControls />
    </div>
    <div className="flex h-[34px] shrink-0 items-end justify-end gap-px border-t-[3px] border-b border-t-[#efefef] border-b-[#858585] bg-[#ccc] pr-2">
      <Tab icon="topology" label="拓扑视图" className="w-[133px] gap-1" />
      <Tab icon="net" label="网络视图" className="w-[133px] gap-1" />
      <Tab icon="config" label="设备视图" active className="w-[131px] gap-1" />
    </div>
    <div className="flex min-h-0 flex-1">
      <div className="flex min-w-0 flex-1 flex-col">
        <div className="flex h-[34px] shrink-0 items-center bg-[#e9e9e9] pl-1">
          <Tool icon="netback" label="返回" />
          <Sep />
          <Combo id="device" label="设备" value="PLC_proxy_3 [设备代理]" className="mr-1 ml-[3px] w-[225px]" />
          <Sep />
          <Tool icon="addr" label="地址" />
          <Sep />
          <Tool icon="rename" label="重命名" />
          <Sep />
          <Tool icon="pen" label="显示" on className="w-7" />
          <Tool icon="grid" label="网格" className="w-8" />
          <Tool icon="side" label="侧栏" on className="w-7" />
          <Sep />
          <Tool icon="zoom" label="缩放" className="w-7" />
          <DropMark />
          <span className="flex-1" />
          <Tool icon="userlayout" label="布局" className="mr-3.5 w-[30px]" />
        </div>
        <div className="flex min-h-0 flex-1">
          <Canvas />
          <div className="flex w-[22px] shrink-0 flex-col bg-[#c3c3c3]">
            <ScrollButton dir="up" />
            <span className="mt-0.5 flex h-6 w-[22px] items-center justify-center border border-[#929292] bg-[#e0e0e0] ring-1 ring-white ring-inset">
              <svg viewBox="0 0 10 10" className="size-2.5" stroke="#666">
                <path d="M0 .5h10M0 3.500h10M0 6.500h10M0 9.500h10" />
              </svg>
            </span>
            <ScrollButton dir="down" className="mt-auto" />
          </div>
        </div>
        <div className="flex h-[23px] shrink-0 items-start bg-[#e9e9e9]">
          <div className="flex h-full flex-1 items-start bg-[#c3c3c3]">
            <ScrollButton dir="left" />
            <span className="ml-0.5 flex h-[22px] w-[100px] items-center justify-center border border-[#929292] bg-linear-to-b from-[#f0f0f0] to-[#d4d4d4]">
              <svg viewBox="0 0 10 8" className="h-2 w-2.5" stroke="#666">
                <path d="M.5 0v8M3.500 0v8M6.500 0v8M9.500 0v8" />
              </svg>
            </span>
            <ScrollButton dir="right" className="ml-auto" />
          </div>
          <Combo id="zoom" label="缩放比例" value="100%" className="mr-[22px] ml-2 w-[195px]" />
          <ZoomSlider />
          <button aria-label="概览" className="ml-[22px] flex h-full w-[22px] items-center justify-center bg-white">
            <Icon name="overview" className="size-[18px]" />
          </button>
        </div>
      </div>
      <div className="mt-0.5 flex w-2.5 shrink-0 flex-col gap-[11px] border-t border-l-2 border-[#9a9a9a] bg-[#d8d8d8] pt-[178px]">
        <button aria-label="展开" className="flex h-8 items-center border-y border-[#888] bg-[#bcbcbc]">
          <svg viewBox="0 0 5 8" className="ml-0.5 h-2 w-[5px]">
            <path d="M5 0v8L0 4z" />
          </svg>
        </button>
        <button aria-label="收起" className="flex h-[30px] items-center border-y border-[#999] bg-[#e6e6e6]">
          <svg viewBox="0 0 5 8" className="ml-0.5 h-2 w-[5px]" fill="#888">
            <path d="M0 0v8l5-4z" />
          </svg>
        </button>
      </div>
      <div className="mt-0.5 flex w-[23px] shrink-0 items-start overflow-hidden border-t border-[#9a9a9a] bg-[#b0b0b0] pt-[182px] pl-1">
        <span className="text-[17px] leading-[17px] font-bold text-white [text-orientation:sideways] [writing-mode:vertical-rl]">
          设备数据
        </span>
      </div>
    </div>
  </section>
);

/* ---------- inspector ---------- */

type Message = {
  ok?: boolean;
  text: string;
  time: string;
  indent: string;
  arrow?: boolean;
  tone?: string;
};

const messages: Message[] = [
  { ok: true, text: "项目 测试触摸屏画面24.1.13 已成功保存。", time: "11:19:03", indent: "pl-7" },
  { ok: true, text: "项目 测试触摸屏画面24.1.13 已成功保存。", time: "11:19:49", indent: "pl-7" },
  { text: "开始下载到设备。", time: "11:20:08", indent: "pl-[5px]", arrow: true, tone: "grey" },
  { text: "HMI_1", time: "11:21:57", indent: "pl-7", arrow: true },
  { text: "文件 pdata.srt 正在加载", time: "11:22:01", indent: "pl-[73px]" },
  { text: "文件 pdata.pwx 正在加载", time: "11:22:03", indent: "pl-[73px]" },
  { text: "文件 pdata.ORIE.cnk 正在加载", time: "11:22:03", indent: "pl-[73px]" },
  { text: "文件 pdata.ETH0.cnk 正在加载", time: "11:22:03", indent: "pl-[73px]" },
  {
    text: "扫描接口 Realtek PCIe GbE Family Controller 上的设备已完成。在网络上找到了 4 个设备。",
    time: "11:20:36",
    indent: "pl-7",
  },
  { ok: true, text: "下载完成（错误：0；警告：0）。", time: "11:22:04", indent: "pl-7", tone: "selected" },
];

const thClass =
  "border-r border-b border-[#adadad] bg-linear-to-b from-[#e8e8e8] via-[#cdcdcd] to-[#e0e0e0] p-0 pl-[5px] text-left font-normal";

const MessageTable = () => (
  <table className="h-[263px] w-full min-w-0 flex-1 table-fixed border-separate border-spacing-0 text-[15px] leading-none text-[#1c1c1c]">
    <colgroup>
      <col className="w-9" />
      <col />
      <col className="w-16" />
      <col className="w-[62px]" />
      <col className="w-[91px]" />
      <col className="w-[118px]" />
    </colgroup>
    <thead>
      <tr className="h-6 text-base leading-none">
        <th className={clsx(thClass, "text-sm leading-none text-[#6a7a90]")}>
          <span className="pl-1">!</span>
        </th>
        <th className={thClass}>消息</th>
        <th className={thClass}>转至</th>
        <th className={clsx(thClass, "text-sm leading-none text-[#4a5a70]")}>?</th>
        <th className={thClass}>日期</th>
        <th className={thClass}>时间</th>
      </tr>
    </thead>
    <tbody className="font-['Noto_Sans','Noto_Sans_CJK_TC',sans-serif] [&_td]:border-b [&_td]:border-white [&_td]:p-0 [&_td]:pb-0.5">
      {messages.map((m, i) => (
        <tr key={i} className={rowTone(m.tone)}>
          <td
            className={clsx(
              m.tone === "selected" && "outline outline-dotted outline-[#999] -outline-offset-1"
            )}
          >
            <Icon name={m.ok ? "ok" : "info"} className="ml-[7px] size-5" />
          </td>
          <td>
            <div className={clsx("flex items-center whitespace-nowrap", m.indent)}>
              {m.arrow && (
                <span className="mr-[9px]">
                  <TreeArrow state="open" />
                </span>
              )}
              {m.text}
            </div>
          </td>
          <td className={clsx(m.tone === "selected" && "bg-[#d9dee2]")} />
          <td />
          <td className="text-[#333]">
            <span className="pl-[5px]">2024/1/13</span>
          </td>
          <td className="text-[#333]">
            <span className="pl-[5px]">{m.time}</span>
          </td>
        </tr>
      ))}
    </tbody>
  </table>
);

const Inspector = () => (
  <section className="flex shrink-0 flex-col border-t-[3px] border-[#1e2638]">
    <div className="flex h-[30px] items-end gap-0.5 bg-[#b0b0b0] pr-1.5">
      <span className="flex-1" />
      <Tab icon="props" label="属性" className="w-24 gap-1" />
      <Tab icon="infotab" label="信息" active className="w-24 gap-1" />
      <Tab icon="diag" label="诊断" className="w-24 gap-1" />
      <div className="ml-6 flex items-center gap-[9px] self-center">
        <button aria-label="浮动">
          <svg viewBox="0 0 14 14" className="size-3.5" fill="#fff">
            <path d="M4 0h10v10h-2V2H4zM0 4h10v10H0z" />
          </svg>
        </button>
        <button aria-label="停靠">
          <svg viewBox="0 0 14 14" className="size-3.5" fill="none" stroke="#e4e4e4">
            <path d="M.5.500h13v13H.5zM0 4h14M0 7h14M0 10h14" />
          </svg>
        </button>
        <button aria-label="折叠">
          <svg viewBox="0 0 14 8" className="h-2 w-3.5" fill="#fff">
            <path d="M0 0h14L7 8z" />
          </svg>
        </button>
      </div>
    </div>
    <div className="flex h-[34px] items-end gap-0.5 border-t-[3px] border-b border-t-[#e9e9e9] border-b-[#858585] bg-[#ccc] pl-[7px]">
      <Tab label="常规" active className="w-20 pl-3.5" />
      <Tab label="交叉引用" className="w-[119px] pl-3.5" />
      <Tab label="编译" className="w-20 pl-3.5" />
    </div>
    <div className="flex h-[34px] items-center gap-0.5 bg-[#e9e9e9] pl-[5px]">
      <Tool icon="error" label="错误" on className="w-7" />
      <Tool icon="warn" label="警告" on className="w-7" />
      <Tool icon="info" label="信息" on className="w-7" />
      <Combo
        id="filter"
        label="过滤"
        value="显示所有消息"
        text="pl-[3px] text-base"
        className="ml-[3px] w-[250px]"
      />
    </div>
    <div className="h-[26px] bg-[#efefef]" />
    <div className="flex">
      <MessageTable />
      <div className="flex w-[22px] shrink-0 flex-col">
        <div className="h-6 border-b border-[#adadad] bg-linear-to-b from-[#e8e8e8] via-[#cdcdcd] to-[#e0e0e0]" />
        <div className="flex flex-1 flex-col bg-[#c3c3c3]">
          <ScrollButton dir="up" />
          <span className="mt-auto mb-2 flex size-[22px] items-center justify-center border border-[#929292] bg-[#e0e0e0] ring-1 ring-white ring-inset">
            <svg viewBox="0 0 10 10" className="size-2.5" stroke="#666">
              <path d="M0 .5h10M0 3.500h10M0 6.500h10M0 9.500h10" />
            </svg>
          </span>
          <ScrollButton dir="down" />
        </div>
      </div>
    </div>
    <div className="flex h-6 items-center bg-[#c3c3c3] pr-[22px]">
      <ScrollButton dir="left" />
      <span className="mr-[22px] ml-0.5 flex h-[22px] flex-1 items-center justify-center border border-[#929292] bg-linear-to-b from-[#eaeaea] to-[#d4d4d4]">
        <svg viewBox="0 0 10 8" className="h-2 w-2.5" stroke="#666">
          <path d="M.5 0v8M3.500 0v8M6.500 0v8M9.500 0v8" />
        </svg>
      </span>
      <ScrollButton dir="right" />
    </div>
  </section>
);

/* ---------- dialog ---------- */

const InitDialog = ({ onClose }: { onClose: () => void }) => (
  <div
    role="dialog"
    aria-labelledby="dialog-title"
    className="fixed top-[380px] left-[736px] w-[447px] border border-white font-['Noto_Sans','Noto_Sans_CJK_TC',sans-serif]"
  >
    <div className="border-2 border-[#555]">
      <div className="flex h-6 items-center bg-linear-to-b from-[#777] via-[#2b2b2b] via-50% to-[#1a1a1a] pl-1 text-white">
        <h2 id="dialog-title" className="flex-1 pb-0.5 text-[19px] leading-none font-semibold">
          初始化设备代理 (0036:000001)
        </h2>
        <button
          aria-label="关闭"
          onClick={onClose}
          className="flex h-full w-6 items-center justify-center border-l border-[#999]"
        >
          <svg viewBox="0 0 14 14" className="size-3.5" stroke="#fff" strokeWidth="2.400">
            <path d="M1 1l12 12M13 1L1 13" />
          </svg>
        </button>
      </div>
      <div className="flex h-[140px] items-start gap-[18px] bg-[#ccc] pt-3.5 pl-3.5 text-black">
        <Icon name="ok" className="size-[60px]" />
        <div className="pt-4">
          <p className="text-lg leading-5 font-bold">
            设备代理 <span className="font-normal">PLC_proxy_3</span> 的初始化已成功
            <br />
            完成。
          </p>
          <p className="mt-4 text-[15px] leading-5">请注意巡视窗口中“信息 &gt; 常规”下可能的警告。</p>
        </div>
      </div>
      <div className="flex h-[53px] items-center justify-end bg-[#b0b0b0] pr-3.5">
        <button
          onClick={onClose}
          className="h-[25px] w-[91px] border-2 border-[#5d8f5d] bg-linear-to-b from-[#e6fbe2] via-[#7cc678] to-[#b4f0ac] text-[15px] leading-none text-black"
        >
          确定
        </button>
      </div>
      <div className="h-2.5 bg-linear-to-b from-[#777] to-[#1a1a1a] to-40%" />
    </div>
  </div>
);

export default function App() {
  const [dialogOpen, setDialogOpen] = useState<boolean>(true);

  return (
    <div className="flex h-screen flex-col overflow-hidden bg-[#1c1c1c] pt-1 pb-[3px] font-['Noto_Sans','Noto_Sans_CJK_SC',sans-serif]">
      <Gradients />
      <Header />
      <main className="flex min-h-0 flex-1 bg-[#1e2638]">
        <div className="flex w-[29px] shrink-0 flex-col bg-[#b0b0b0]">
          <div className="h-8 border-b border-white" />
          <div className="flex h-[276px] items-start border-b border-white pt-[91px]">
            <span className="rotate-180 text-[19px] leading-6 font-bold text-white [text-orientation:sideways] [writing-mode:vertical-rl]">
              设备与网络
            </span>
          </div>
        </div>
        <div className="w-px shrink-0" />
        <ProjectTree />
        <div className="w-1 shrink-0" />
        <div className="mr-0.5 flex min-w-0 flex-1 flex-col">
          <DeviceEditor />
          <Inspector />
        </div>
      </main>
      {dialogOpen && <InitDialog onClose={() => setDialogOpen(false)} />}
      <span className="fixed right-3.5 bottom-1.5 text-sm leading-5 text-white/80 text-shadow-[1px_1px_1px_#555]">
        CSDN @RXXW_Dor
      </span>
    </div>
  );
}
